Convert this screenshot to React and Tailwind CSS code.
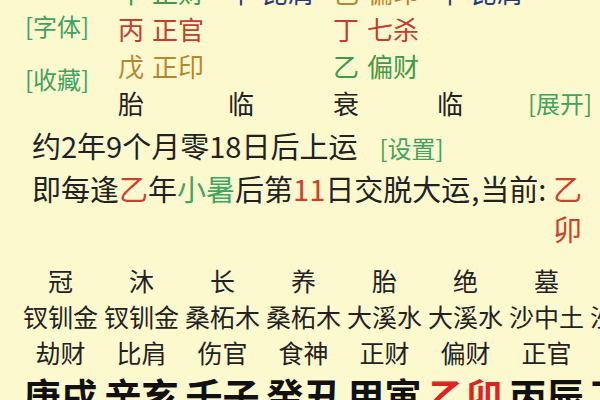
export default function App() {
  const topRows = [
    [
      { g: "甲", s: "正财", c: "text-[#3f9a4c]" },
      { g: "辛", s: "比肩", c: "text-[#2b3a7a]" },
      { g: "己", s: "偏印", c: "text-[#b8862e]" },
      { g: "辛", s: "比肩", c: "text-[#2b3a7a]" },
    ],
    [
      { g: "丙", s: "正官", c: "text-[#c43d2d]" },
      null,
      { g: "丁", s: "七杀", c: "text-[#c43d2d]" },
      null,
    ],
    [
      { g: "戊", s: "正印", c: "text-[#b8862e]" },
      null,
      { g: "乙", s: "偏财", c: "text-[#3f9a4c]" },
      null,
    ],
  ];
  const widths = ["w-[110px]", "w-[105px]", "w-[104px]", "w-[91px]"];
  const states = ["冠", "沐", "长", "养", "胎", "绝", "墓", ""];
  const nayin = ["钗钏金", "钗钏金", "桑柘木", "桑柘木", "大溪水", "大溪水", "沙中土", "沙中土"];
  const shens = ["劫财", "比肩", "伤官", "食神", "正财", "偏财", "正官", "七杀"];
  const gz = ["庚戌", "辛亥", "壬子", "癸丑", "甲寅", "乙卯", "丙辰", "丁巳"];
  return (
    <div className="w-[600px] h-[400px] overflow-hidden bg-[#fcf9cf] text-[#222] font-['Noto_Sans_CJK_SC','Noto_Sans',sans-serif]">
      <div className="flex -mt-[27px]">
        <div className="w-[118px] pl-[25px] pt-[38px] flex flex-col gap-[23px] text-[24px] leading-[30px] text-[#43a25f]">
          <div>[字体]</div>
          <div>[收藏]</div>
        </div>
        <div className="flex flex-col text-[26px] leading-[37px]">
          {topRows.map((row, i) => (
            <div key={i} className="flex h-[37px]">
              {row.map((cell, j) => (
                <div key={j} className={`${widths[j]} whitespace-nowrap ${cell ? cell.c : ""}`}>
                  {cell ? (
                    <span>
                      {cell.g}
                      <span className="ml-[8px]">{cell.s}</span>
                    </span>
                  ) : null}
                </div>
              ))}
            </div>
          ))}
          <div className="flex h-[37px]">
            <div className="w-[110px]">胎</div>
            <div className="w-[105px]">临</div>
            <div className="w-[104px]">衰</div>
            <div className="w-[91px]">临</div>
            <div className="text-[24px] text-[#43a25f] whitespace-nowrap">[展开]</div>
          </div>
        </div>
      </div>

      <div className="mt-[4px] pl-[32px] text-[29px] leading-[40px] whitespace-nowrap">
        约2年9个月零18日后上运
        <span className="ml-[22px] text-[24px] text-[#43a25f]">[设置]</span>
      </div>
      <div className="flex pl-[32px] pr-[18px] text-[29px] leading-[40px]">
        <div className="whitespace-nowrap">
          即每逢<span className="text-[#cf3f2c]">乙</span>年<span className="text-[#3fa75e]">小暑</span>后第<span className="text-[#cf3f2c]">11</span>日交脱大运<span className="mx-[1px]">,</span>当前:
        </div>
        <div className="ml-auto flex flex-col text-[#cf3f2c]">
          <span>乙</span>
          <span>卯</span>
        </div>
      </div>

      <div className="mt-[14px] pl-[20px]">
        <div className="flex text-[25px] leading-[36px] h-[36px]">
          {states.map((s, i) => (
            <div key={i} className="w-[81px] shrink-0 text-center">{s}</div>
          ))}
        </div>
        <div className="flex text-[25px] leading-[36px] h-[36px]">
          {nayin.map((s, i) => (
            <div key={i} className="w-[81px] shrink-0 text-center whitespace-nowrap">{s}</div>
          ))}
        </div>
        <div className="flex text-[25px] leading-[36px] h-[36px]">
          {shens.map((s, i) => (
            <div key={i} className="w-[81px] shrink-0 text-center">{s}</div>
          ))}
        </div>
        <div className="flex text-[37px] leading-[50px] h-[50px] font-bold">
          {gz.map((s, i) => (
            <div key={i} className={`w-[81px] shrink-0 text-center whitespace-nowrap ${i === 5 ? "text-[#e02222]" : "text-[#111]"}`}>{s}</div>
          ))}
        </div>
      </div>
    </div>
  );
}
